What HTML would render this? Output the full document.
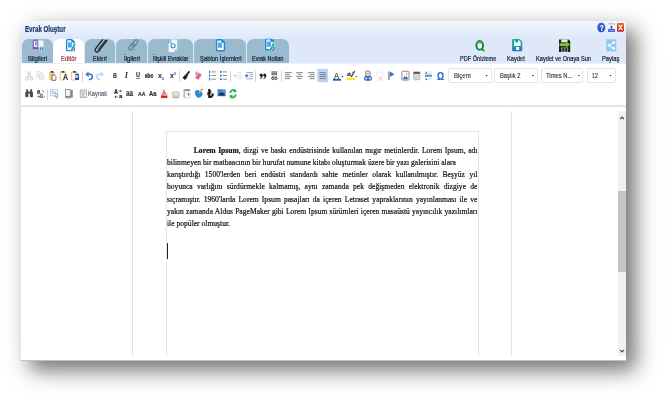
<!DOCTYPE html>
<html lang="tr">
<head>
<meta charset="utf-8">
<title>Evrak Oluştur</title>
<style>
html,body{margin:0;padding:0;}
body{width:668px;height:404px;background:#fff;position:relative;overflow:hidden;font-family:'Liberation Sans',Arial,sans-serif;}
#win{position:absolute;left:21px;top:21px;width:605px;height:340px;background:#fff;
  box-shadow:9px 9px 18px rgba(0,0,0,0.48), 9px 9px 32px rgba(0,0,0,0.13);}
#hdr{position:absolute;left:0;top:0;width:605px;height:42.5px;background:linear-gradient(#f4f8fd 0px,#e1ebfa 14px,#dee8f8 16px,#dee8f8 41px,#eaf1fb 42.5px);}
.tab{position:absolute;top:17.8px;height:24.4px;background:#9abbce;border-radius:6.5px 6.5px 0 0;}
.tab.act{background:#fff;}
.t{position:absolute;line-height:1;white-space:nowrap;transform-origin:0 0;filter:blur(0.3px);-webkit-text-stroke:0.2px currentColor;}
.sep{position:absolute;width:1px;background:#d4d4d4;}
.combo{position:absolute;top:47px;height:15px;border:1px solid #e3e3e3;border-radius:1.5px;background:#fff;box-sizing:border-box;}
.combo i{position:absolute;right:3.6px;top:5.2px;width:0;height:0;border-left:1.4px solid transparent;border-right:1.4px solid transparent;border-top:1.9px solid #333;}
#hr{position:absolute;left:0;top:84.2px;width:605px;height:1.6px;background:#e4e4e4;}
.vl{position:absolute;top:90px;width:1.3px;height:245px;background:#e0e3e9;}
#page{position:absolute;left:145.2px;top:110px;width:312.6px;height:225px;border:1px solid #e3e3e3;border-bottom:none;box-sizing:border-box;}
.bl{position:absolute;left:146.00px;width:376.07px;font-family:'Liberation Serif','Times New Roman',serif;font-size:9.2px;line-height:1;color:#101010;-webkit-text-stroke:0.22px #101010;filter:blur(0.3px);transform-origin:0 0;transform:scaleX(0.8254);white-space:nowrap;margin:0;}
.bl.j{white-space:normal;text-align:justify;text-align-last:justify;}
#caret{position:absolute;left:146px;top:222px;width:1px;height:15.5px;background:#222;}
#sb{position:absolute;left:597.3px;top:90.2px;width:7.7px;height:245px;background:#f1f1f1;}
#thumb{position:absolute;left:0;top:80px;width:7.7px;height:81px;background:#c5c5c5;}
#bot{position:absolute;left:0;top:338.8px;width:605px;height:1.4px;background:linear-gradient(#cfe0f5,#93a9c8);}
#ico{position:absolute;left:0;top:0;width:605px;height:340px;overflow:visible;filter:blur(0.28px);}
</style>
</head>
<body>
<div id="win">
<div id="hdr"></div>
<div class="tab" style="left:0.9px;width:30.9px"></div>
<div class="tab act" style="left:32.3px;width:31.0px"></div>
<div class="tab" style="left:64.0px;width:30.4px"></div>
<div class="tab" style="left:95.3px;width:30.5px"></div>
<div class="tab" style="left:126.9px;width:45.4px"></div>
<div class="tab" style="left:173.4px;width:51.6px"></div>
<div class="tab" style="left:226.3px;width:42.0px"></div>
<div class="sep" style="left:60.5px;top:50px;height:10.8px"></div>
<div class="sep" style="left:157.7px;top:50px;height:10.8px"></div>
<div class="sep" style="left:208.9px;top:50px;height:10.8px"></div>
<div class="sep" style="left:234.2px;top:50px;height:10.8px"></div>
<div class="sep" style="left:259.9px;top:50px;height:10.8px"></div>
<div class="sep" style="left:25.9px;top:67.9px;height:10.8px"></div>
<div class="combo" style="left:427.1px;width:44.0px"></div>
<div class="combo" style="left:473.4px;width:43.4px"></div>
<div class="combo" style="left:519.7px;width:42.8px"></div>
<div class="combo" style="left:565.8px;width:28.9px"></div>
<div id="hr"></div>
<div class="vl" style="left:111.2px"></div>
<div class="vl" style="left:489.6px"></div>
<div id="page"></div>
<div class="bl j" style="top:125.00px;text-indent:32.47px;"><b>Lorem Ipsum</b>, dizgi ve baskı endüstrisinde kullanılan mıgır metinlerdir. Lorem Ipsum, adı</div>
<div class="bl" style="top:137.00px;">bilinmeyen bir matbaacının bir hurufat numune kitabı oluşturmak üzere bir yazı galerisini alara</div>
<div class="bl j" style="top:149.00px;">karıştırdığı 1500'lerden beri endüstri standardı sahte metinler olarak kullanılmıştır. Beşyüz yıl</div>
<div class="bl j" style="top:161.00px;">boyunca varlığını sürdürmekle kalmamış, aynı zamanda pek değişmeden elektronik dizgiye de</div>
<div class="bl j" style="top:174.00px;">sıçramıştır. 1960'larda Lorem Ipsum pasajları da içeren Letraset yapraklarının yayınlanması ile ve</div>
<div class="bl j" style="top:186.00px;">yakın zamanda Aldus PageMaker gibi Lorem Ipsum sürümleri içeren masaüstü yayıncılık yazılımları</div>
<div class="bl" style="top:198.00px;">ile popüler olmuştur.</div>
<div id="caret"></div>
<div id="sb"><div id="thumb"></div></div>
<div id="bot"></div>
<svg id="ico" viewBox="21 21 605 340">
<linearGradient id="gh" x1="0" y1="0" x2="1" y2="1"><stop offset="0" stop-color="#3c70e0"/><stop offset="1" stop-color="#123fb4"/></linearGradient>
<ellipse cx="601.25" cy="27.5" rx="4.3" ry="5.2" fill="url(#gh)" stroke="#f4f8ff" stroke-width="0.7"/>
<rect x="608" y="23" width="7" height="9" rx="0.6" fill="#fbfbfd"/>
<rect x="608" y="23" width="7" height="1.6" fill="#c9c9cc"/>
<rect x="608" y="28.9" width="7" height="3.1" fill="#4a68d8"/>
<path d="M609.4 30.5 h4.2" stroke="#9db0ee" stroke-width="0.7"/>
<path d="M611.45 25.4 L613.2 27.3 H612.1 V28.9 H610.8 V27.3 H609.7 z" fill="#3050c8"/>
<linearGradient id="gc" x1="0" y1="0" x2="0" y2="1"><stop offset="0" stop-color="#ea5f1e"/><stop offset="1" stop-color="#c51f0c"/></linearGradient>
<rect x="617" y="22.9" width="6.9" height="8.9" rx="1.2" fill="url(#gc)"/>
<path d="M618.9 25.2 L622 29.6 M622 25.2 L618.9 29.6" stroke="#fff4ea" stroke-width="1.4" stroke-linecap="round"/>
<path d="M33.3 40.7 L37.9 39.9 V47.3 L33.3 48.2 z" fill="#f5f1f8" stroke="#8b3b9c" stroke-width="0.9"/>
<rect x="35.2" y="39.4" width="1.5" height="6.1" fill="#3f9ff0"/>
<path d="M38.5 39.9 L43.5 40.7 V47.9 L38.5 47.3 z" fill="#f4f4f6" stroke="#cfd0d8" stroke-width="0.5"/>
<path d="M32.9 47.5 q2.7 -1 5.2 0.7 v1.5 q-2.5 -1.5 -5.2 -0.5 z" fill="#8b3b9c"/>
<path d="M38.1 48.2 q1 -0.7 2 -0.8 v1.2 q-1 0.2 -2 1.1 z" fill="#b9b2c0"/>
<circle cx="41.6" cy="48.7" r="2.3" fill="#2b7bd2" stroke="#d7ead9" stroke-width="0.7"/>
<path d="M41.6 48.4 v1.9" stroke="#fff" stroke-width="0.9"/><circle cx="41.6" cy="47.4" r="0.5" fill="#fff"/>
<g transform="translate(0 0)"><path d="M66.6 40.5 q0 -0.9 0.9 -0.9 h4.2 l2.7 2.5 v7.6 q0 0.9 -0.9 0.9 h-6 q-0.9 0 -0.9 -0.9 z" fill="#fdfeff" stroke="#1b8ad8" stroke-width="1.4"/><path d="M71.2 39.2 l3.6 3.3 h-3.6 z" fill="#1b8ad8"/><rect x="68" y="42.5" width="3.9" height="5" fill="#3f9fe6"/><path d="M68 44 h3.9 M68 45.6 h3.9" stroke="#8cc8f4" stroke-width="0.4"/><rect x="68.2" y="40.8" width="1.8" height="0.8" fill="#9fd0f5"/><path d="M74.7 44.2 L71.7 50.2" stroke="#fff" stroke-width="2.6" stroke-linecap="round"/><path d="M74.7 44.2 L71.7 50.2" stroke="#16aa8c" stroke-width="1.7" stroke-linecap="round"/><path d="M70.8 51.6 l0.3 -1.7 l1.2 0.6 z" fill="#56606a"/></g>
<path d="M102.6 39.7 L95.3 49.1 A1.95 1.95 0 0 0 98.3 51.5 L106.8 40.5" stroke="#1e1e1e" stroke-width="1.3" fill="none" stroke-linecap="round"/>
<path d="M105.6 40.0 L98.4 49.4" stroke="#1e1e1e" stroke-width="1.0" fill="none" stroke-linecap="round"/>
<rect x="133.3" y="39.4" width="3.3" height="7.4" rx="1.65" fill="none" stroke="#5f7582" stroke-width="1.05" transform="rotate(36.7 134.95 43.1)"/>
<rect x="129.9" y="42.9" width="3.3" height="7.4" rx="1.65" fill="none" stroke="#5f7582" stroke-width="1.05" transform="rotate(36.7 131.55 46.6)"/>
<path d="M131.2 50.2 h4.6" stroke="#a3929c" stroke-width="0.7"/>
<path d="M168.7 39.6 h8.4 v9.7 l-2.7 2.8 h-5.7 z" fill="#f7f9fb" stroke="#c9d3dc" stroke-width="0.4"/>
<path d="M177.1 49.3 h-2.7 v2.8 z" fill="#bcc8d4"/>
<circle cx="169.6" cy="41.2" r="1.45" fill="none" stroke="#4a90d8" stroke-width="0.95"/>
<circle cx="173.1" cy="45.8" r="2.05" fill="none" stroke="#4a90d8" stroke-width="1.15"/>
<path d="M170.5 42.4 L171.8 44.2" stroke="#4a90d8" stroke-width="0.9"/>
<g transform="translate(150.0 0.2)"><path d="M66.6 40.5 q0 -0.9 0.9 -0.9 h4.2 l2.7 2.5 v7.6 q0 0.9 -0.9 0.9 h-6 q-0.9 0 -0.9 -0.9 z" fill="#fdfeff" stroke="#1b8ad8" stroke-width="1.4"/><path d="M71.2 39.2 l3.6 3.3 h-3.6 z" fill="#1b8ad8"/><rect x="68" y="42.5" width="3.9" height="5" fill="#3f9fe6"/><path d="M68 44 h3.9 M68 45.6 h3.9" stroke="#8cc8f4" stroke-width="0.4"/><rect x="68.2" y="40.8" width="1.8" height="0.8" fill="#9fd0f5"/></g>
<clipPath id="cpn"><rect x="60" y="39.5" width="20" height="14"/></clipPath>
<g transform="translate(199.1 -0.8)" clip-path="url(#cpn)"><path d="M66.6 40.5 q0 -0.9 0.9 -0.9 h4.2 l2.7 2.5 v7.6 q0 0.9 -0.9 0.9 h-6 q-0.9 0 -0.9 -0.9 z" fill="#fdfeff" stroke="#1b8ad8" stroke-width="1.4"/><path d="M71.2 39.2 l3.6 3.3 h-3.6 z" fill="#1b8ad8"/><rect x="68" y="42.5" width="3.9" height="5" fill="#3f9fe6"/><path d="M68 44 h3.9 M68 45.6 h3.9" stroke="#8cc8f4" stroke-width="0.4"/><rect x="68.2" y="40.8" width="1.8" height="0.8" fill="#9fd0f5"/><path d="M74.7 44.2 L71.7 50.2" stroke="#fff" stroke-width="2.6" stroke-linecap="round"/><path d="M74.7 44.2 L71.7 50.2" stroke="#16aa8c" stroke-width="1.7" stroke-linecap="round"/><path d="M70.8 51.6 l0.3 -1.7 l1.2 0.6 z" fill="#56606a"/></g>
<ellipse cx="479.7" cy="45.4" rx="3.3" ry="4.3" fill="#f6fbf7" stroke="#0f8a3a" stroke-width="2"/>
<path d="M482.2 49.2 L483.7 50.7" stroke="#0f8a3a" stroke-width="1.7" stroke-linecap="round"/>
<path d="M478.2 43.6 q1.5 -1.3 3 0" stroke="#0f8a3a" stroke-width="0.8" fill="none"/>
<linearGradient id="gk" x1="0" y1="0" x2="0" y2="1"><stop offset="0" stop-color="#15ae96"/><stop offset="0.6" stop-color="#1c9fb0"/><stop offset="1" stop-color="#1a74b8"/></linearGradient>
<path d="M513.3 39 h6.2 l2.8 2.6 v8.5 q0 1.2 -1.2 1.2 h-7.8 q-1.2 0 -1.2 -1.2 v-9.9 q0 -1.2 1.2 -1.2 z" fill="url(#gk)"/>
<path d="M514 40.4 h1.3 v2.2 h2.7 v-2.2 h1.2 l1.4 1.3 v4.3 h-6.6 z" fill="#fafffe"/>
<rect x="516.1" y="47" width="3" height="3" fill="#fafffe"/>
<path d="M559 39.4 h9.6 l1.6 1.6 v11 h-11.2 z" fill="#1e1e1e"/>
<rect x="561.2" y="39.4" width="6.4" height="3" fill="#e9e9e9"/>
<rect x="561.2" y="47.4" width="6.8" height="4.6" fill="#8d8d8d"/>
<rect x="562.6" y="48.2" width="1.6" height="3.2" fill="#1e1e1e"/><rect x="565.4" y="48.2" width="1.6" height="3.2" fill="#1e1e1e"/>
<path d="M559.6 43.2 h6.6 v-1.4 l3.8 2.8 l-3.8 2.8 v-1.4 h-6.6 z" fill="#7dc62e" stroke="#4d9a14" stroke-width="0.4"/>
<rect x="606.1" y="39.2" width="10.2" height="12.2" fill="#8fcbf0"/>
<path d="M613.6 42.6 L609 45.3 L613.6 48.2" stroke="#fff" stroke-width="0.8" fill="none"/>
<circle cx="613.7" cy="42.5" r="1.35" fill="#fff"/><circle cx="608.9" cy="45.3" r="1.35" fill="#fff"/><circle cx="613.7" cy="48.3" r="1.35" fill="#fff"/>
<path d="M27.2 71.3 L31.2 77.2 M31.4 71.3 L27.4 77.2" stroke="#c2c2c2" stroke-width="0.9" fill="none"/>
<circle cx="27" cy="78.5" r="1.5" fill="none" stroke="#aec6e8" stroke-width="0.9"/><circle cx="31.6" cy="78.5" r="1.5" fill="none" stroke="#aec6e8" stroke-width="0.9"/>
<path d="M37.1 71.5 h3.2 l1 1 v4.6 h-4.2 z" fill="#f3f5f9" stroke="#d3d9e3" stroke-width="0.7"/>
<path d="M39.6 73.8 h3.2 l1.1 1.1 v5 h-4.3 z" fill="#f3f5f9" stroke="#d3d9e3" stroke-width="0.7"/>
<path d="M40.6 76.4 h2 M40.6 77.8 h2" stroke="#cfe0f3" stroke-width="0.6"/>
<rect x="49.2" y="72" width="5.8" height="8.2" rx="0.5" fill="#f2c77c"/>
<rect x="50.6" y="71" width="3" height="1.7" rx="0.4" fill="#4a4a4a"/>
<path d="M52 75 h2.6 l1.3 1.3 v4 h-3.9 z" fill="#fff" stroke="#3e3e3e" stroke-width="0.7"/>
<rect x="60.2" y="72.2" width="5.4" height="7.8" rx="0.5" fill="#fff" stroke="#f2c77c" stroke-width="1.2"/>
<rect x="61.5" y="71" width="3" height="1.7" rx="0.4" fill="#4a4a4a"/>
<rect x="64.2" y="74.6" width="3.8" height="6" fill="#fff"/>
<rect x="71.6" y="72.2" width="5.4" height="7.8" rx="0.5" fill="#fff" stroke="#f2c77c" stroke-width="1.2"/>
<rect x="72.9" y="71" width="3" height="1.7" rx="0.4" fill="#4a4a4a"/>
<rect x="75" y="73.8" width="4" height="6.2" rx="0.4" fill="#2a4b9c"/>
<path d="M87.6 74.3 h2.2 a2.55 2.55 0 0 1 0 5.1 h-1" stroke="#3a78c2" stroke-width="1.5" fill="none"/>
<path d="M85.3 74.3 L88.6 71.4 L88.6 77.2 z" fill="#3a78c2"/>
<path d="M101.6 74.3 h-2.2 a2.55 2.55 0 0 0 0 5.1 h1" stroke="#bdd4ed" stroke-width="1.5" fill="none"/>
<path d="M103.9 74.3 L100.6 71.4 L100.6 77.2 z" fill="#bdd4ed"/>
<path d="M135.9 78.5 h4.2" stroke="#3d3d3d" stroke-width="0.7"/>
<path d="M145.2 75.9 h8.5" stroke="#3d3d3d" stroke-width="0.6"/>
<path d="M189 71.9 L186.5 75" stroke="#1c1c1c" stroke-width="1.8" stroke-linecap="round"/>
<path d="M186.2 74 L188.2 75.6 L187.4 76.6 L185.4 75 z" fill="#1c1c1c"/>
<path d="M185.0 75.0 L187.6 77.1 L185.0 80.0 L182.4 77.8 z" fill="#1c1c1c"/>
<path d="M198.6 72.6 L201.7 74.7 L198.3 79.9 L195.2 77.8 z" fill="#e9637e"/>
<path d="M196.4 71.2 L197.8 72.1 L196.3 75.3 L195 74.5 z" fill="#8f8f8f"/>
<rect x="209" y="70.7" width="1.2" height="2.4" fill="#3b6ec4"/>
<path d="M211.4 71.9 h4.4" stroke="#8c8c8c" stroke-width="1"/>
<rect x="209" y="74.3" width="1.2" height="2.4" fill="#3b6ec4"/>
<path d="M211.4 75.5 h4.4" stroke="#8c8c8c" stroke-width="1"/>
<rect x="209" y="78.0" width="1.2" height="2.4" fill="#3b6ec4"/>
<path d="M211.4 79.2 h4.4" stroke="#8c8c8c" stroke-width="1"/>
<rect x="220" y="71.0" width="1.7" height="1.8" fill="#3b6ec4"/>
<path d="M222.8 71.9 h4.3" stroke="#8c8c8c" stroke-width="1"/>
<rect x="220" y="74.6" width="1.7" height="1.8" fill="#3b6ec4"/>
<path d="M222.8 75.5 h4.3" stroke="#8c8c8c" stroke-width="1"/>
<rect x="220" y="78.3" width="1.7" height="1.8" fill="#3b6ec4"/>
<path d="M222.8 79.2 h4.3" stroke="#8c8c8c" stroke-width="1"/>
<path d="M233.4 75.7 L236 73.6 V77.8 z" fill="#c5daf1"/><path d="M236 75.7 h1.4" stroke="#c5daf1" stroke-width="1"/>
<path d="M237.2 72.7 h4.4 M238.6 74.7 h3 M238.6 76.7 h3 M237.2 78.7 h4.4" stroke="#dcdcdc" stroke-width="0.9"/>
<path d="M248.6 75.7 L246.2 73.5 V77.9 z" fill="#2f80d8"/><path d="M244.9 75.7 h1.6" stroke="#2f80d8" stroke-width="1.3"/>
<path d="M246.6 72.5 h6.2 M249.6 74.6 h3.2 M249.6 76.7 h3.2 M246.6 78.8 h6.2" stroke="#9a9a9a" stroke-width="0.9"/>
<circle cx="261.1" cy="75.1" r="1.55" fill="#1f1f1f"/>
<path d="M262.65000000000003 75.1 q0.2 3 -2.6 4 l-0.2 -0.6 q1.4 -0.8 1.5 -2.4 z" fill="#1f1f1f"/>
<circle cx="264.7" cy="75.1" r="1.55" fill="#1f1f1f"/>
<path d="M266.25 75.1 q0.2 3 -2.6 4 l-0.2 -0.6 q1.4 -0.8 1.5 -2.4 z" fill="#1f1f1f"/>
<path d="M271.4 71.9 h5.8 M271.4 73.3 h5.8 M271.4 74.7 h5.8" stroke="#444" stroke-width="0.7"/>
<path d="M272.3 71.6 v3.4 M274.3 71.6 v3.4 M276.3 71.6 v3.4" stroke="#444" stroke-width="0.5"/>
<circle cx="272.9" cy="78.5" r="1.15" fill="none" stroke="#2a2a2a" stroke-width="0.8"/>
<path d="M271.79999999999995 78.3 q0 -1.8 1.8 -2.2" stroke="#2a2a2a" stroke-width="0.7" fill="none"/>
<circle cx="275.9" cy="78.5" r="1.15" fill="none" stroke="#2a2a2a" stroke-width="0.8"/>
<path d="M274.79999999999995 78.3 q0 -1.8 1.8 -2.2" stroke="#2a2a2a" stroke-width="0.7" fill="none"/>
<rect x="317.8" y="69.2" width="9.8" height="12.7" fill="#bdd4f3" stroke="#aac5ee" stroke-width="0.5"/>
<path d="M284.9 72.7 H291.7" stroke="#7d7d7d" stroke-width="0.95"/>
<path d="M284.9 74.7 H289.8" stroke="#7d7d7d" stroke-width="0.95"/>
<path d="M284.9 76.6 H291.7" stroke="#7d7d7d" stroke-width="0.95"/>
<path d="M284.9 78.6 H290" stroke="#7d7d7d" stroke-width="0.95"/>
<path d="M296.2 72.7 H302.9" stroke="#7d7d7d" stroke-width="0.95"/>
<path d="M297.6 74.7 H301.5" stroke="#7d7d7d" stroke-width="0.95"/>
<path d="M296.2 76.6 H302.9" stroke="#7d7d7d" stroke-width="0.95"/>
<path d="M297.4 78.6 H301.7" stroke="#7d7d7d" stroke-width="0.95"/>
<path d="M307.9 72.7 H314.6" stroke="#7d7d7d" stroke-width="0.95"/>
<path d="M310 74.7 H314.6" stroke="#7d7d7d" stroke-width="0.95"/>
<path d="M307.9 76.6 H314.6" stroke="#7d7d7d" stroke-width="0.95"/>
<path d="M309.8 78.6 H314.6" stroke="#7d7d7d" stroke-width="0.95"/>
<path d="M319.4 72.7 H326" stroke="#74808f" stroke-width="0.95"/>
<path d="M319.4 74.7 H326" stroke="#74808f" stroke-width="0.95"/>
<path d="M319.4 76.6 H326" stroke="#74808f" stroke-width="0.95"/>
<path d="M319.4 78.6 H326" stroke="#74808f" stroke-width="0.95"/>
<rect x="332.9" y="78.8" width="8.2" height="1.9" fill="#2a61b0"/>
<path d="M341.4 76.1 h2 l-1 1.2 z" fill="#333"/>
<path d="M354.6 71.4 L351.4 76.6" stroke="#3a3a3a" stroke-width="1.1" stroke-linecap="round"/>
<path d="M351.8 71.8 L353.6 73" stroke="#3a3a3a" stroke-width="0.7"/>
<rect x="347" y="78.1" width="8" height="2.1" fill="#f4f000"/>
<path d="M355.3 76.1 h2 l-1 1.2 z" fill="#333"/>
<rect x="365.4" y="70.9" width="4.8" height="5.6" rx="2.2" fill="#e2e2e2" stroke="#a2a2a2" stroke-width="1.1"/>
<path d="M365.6 74 h4.4" stroke="#a2a2a2" stroke-width="0.8"/>
<rect x="364" y="76.1" width="8" height="4.6" rx="2.3" fill="#2b6cbc"/>
<ellipse cx="366.2" cy="78.4" rx="1" ry="0.9" fill="#fff"/><ellipse cx="369.8" cy="78.4" rx="1" ry="0.9" fill="#fff"/>
<path d="M377 74.4 a1.8 1.8 0 0 1 2.6 -2.2 M380.4 72.2 a1.8 1.8 0 0 1 2.6 2.2" stroke="#bcd3ee" stroke-width="0.9" fill="none" stroke-dasharray="1.2 0.6"/>
<path d="M378.2 76 L382.8 80.6 M382.8 76 L378.2 80.6" stroke="#f1b6a7" stroke-width="0.9"/>
<path d="M388.9 71.4 V80" stroke="#8e8e8e" stroke-width="1.5"/>
<path d="M389.9 71.5 L394.4 74.2 L389.9 76.9 z" fill="#2f78cf"/>
<rect x="401.9" y="71.3" width="7.1" height="8.8" rx="0.5" fill="#fff" stroke="#8c8c8c" stroke-width="1"/>
<path d="M402.8 79.2 L404.5 75.9 L405.6 77.6 L406.7 76.2 L408.2 79.2 z" fill="#2b6cbc"/>
<rect x="406" y="72.8" width="1.3" height="1.8" fill="#f0a236"/>
<rect x="413.6" y="71.9" width="6.3" height="7.8" rx="0.6" fill="#f1f1f1" stroke="#a1a1a1" stroke-width="0.7"/>
<rect x="413.6" y="71.9" width="6.3" height="2" fill="#555"/>
<path d="M415.7 73.9 v5.8 M417.8 73.9 v5.8 M413.6 75.8 h6.3 M413.6 77.8 h6.3" stroke="#b0b0b0" stroke-width="0.5"/>
<rect x="424.9" y="74.6" width="7.2" height="2.3" fill="#5d9de2"/>
<path d="M425.1 73.7 L426.3 71.3 L427.5 73.7 z M425.1 80.1 L426.3 77.7 L427.5 80.1 z" fill="#6a6a6a"/>
<path d="M428.4 72 h3.4 M428.4 73.3 h2.6 M428.4 78.4 h3.4 M428.4 79.7 h2.6" stroke="#cfcfcf" stroke-width="0.7"/>
<rect x="25.3" y="91.8" width="3.1" height="5.5" rx="0.8" fill="#4d4d4d"/><rect x="29.9" y="91.8" width="3.1" height="5.5" rx="0.8" fill="#4d4d4d"/>
<rect x="26.2" y="89.2" width="1.9" height="3.2" rx="0.5" fill="#4d4d4d"/><rect x="30.2" y="89.2" width="1.9" height="3.2" rx="0.5" fill="#4d4d4d"/>
<rect x="27.9" y="91.6" width="2.6" height="2" fill="#4d4d4d"/>
<path d="M37.2 96.6 h2.4 M38.6 95.4 l1.4 1.2 l-1.4 1.2" stroke="#2b6cc4" stroke-width="0.8" fill="none"/>
<path d="M43.6 97.6 q0.8 -0.2 0.8 -1.4 M42.2 90.6 q1.6 0.2 1.6 1.8" stroke="#2b6cc4" stroke-width="0.8" fill="none"/>
<rect x="50.6" y="89.4" width="7" height="6.4" fill="#f4f8fe" stroke="#5c96de" stroke-width="0.7" stroke-dasharray="1 0.7"/>
<path d="M51.8 91.4 h2.6 M51.8 93 h2" stroke="#5c96de" stroke-width="0.7"/>
<path d="M55.2 92.2 L58.2 95.8 L56.9 95.9 L57.6 97.9 L56.8 98.2 L56 96.2 L55.2 97 z" fill="#fff" stroke="#666" stroke-width="0.5"/>
<rect x="65.5" y="89.5" width="4.8" height="7" fill="#f6f6f6" stroke="#858585" stroke-width="0.8"/>
<path d="M71.9 90.4 V97.0" stroke="#666" stroke-width="1.4" stroke-linecap="round"/>
<ellipse cx="68.2" cy="97.2" rx="2.7" ry="0.9" fill="#d8d8d8" stroke="#555" stroke-width="0.7"/>
<rect x="80.3" y="89.9" width="6.2" height="7.7" fill="#f3f3f3" stroke="#777" stroke-width="0.8" stroke-dasharray="1.2 0.5"/>
<path d="M81.6 91.8 h3.6 M81.6 93.3 h3.6 M81.6 94.8 h2.6 M81.6 96.2 h3.2" stroke="#7d7d7d" stroke-width="0.7" stroke-dasharray="1 0.4"/>
<path d="M118.6 91 h2.6 M120.2 90 l1.2 1 l-1.2 1" stroke="#222" stroke-width="0.7" fill="none"/>
<path d="M117.6 96.8 h-2.6 M116 95.8 l-1.2 1 l1.2 1" stroke="#222" stroke-width="0.7" fill="none"/>
<path d="M161.1 89.5 h4.4 l1.8 1.8 v6.6 h-6.2 z" fill="#fff" stroke="#d6d6d6" stroke-width="0.5"/>
<rect x="161.1" y="95.5" width="6.2" height="2.4" fill="#d8191c"/>
<path d="M162.3 94.7 C163.9 92.3 164.7 90.9 164 90.4 C163.2 90.2 163.6 92.5 166.3 93.9 C164.6 93.7 163.2 94.1 162.3 94.7 z" fill="none" stroke="#d8191c" stroke-width="0.8"/>
<rect x="172.3" y="91.7" width="7" height="5.6" rx="1.4" fill="#d2d2d2" stroke="#b4b4b4" stroke-width="0.6"/>
<rect x="173.4" y="92.6" width="4.8" height="2.6" rx="0.8" fill="#e4e4e4"/>
<path d="M173 97.6 h5.6" stroke="#8f8f8f" stroke-width="0.8"/>
<rect x="184" y="89.3" width="6" height="8.6" fill="#fdfdfd" stroke="#d6c9a8" stroke-width="0.6"/>
<path d="M184.2 89.3 v8.6" stroke="#d99b38" stroke-width="1"/>
<rect x="184.8" y="89.4" width="5.1" height="1.5" fill="#4b82d2"/>
<path d="M186 92.6 h2.6 M186 94.2 h1.6" stroke="#bdbdbd" stroke-width="0.6"/><rect x="188.2" y="93" width="1" height="2.6" fill="#555"/>
<path d="M194.8 92.4 q0.2 -2.4 2.8 -2.4 q1.6 0 2.2 1.2 q2.6 -0.2 2.8 2.2 q0.2 2.6 -3.6 4.6 q-4 -1.4 -4.2 -5.6 z" fill="#2a8dd6"/>
<path d="M201.9 89.5 L199.4 92.5" stroke="#e9b233" stroke-width="1.2" stroke-linecap="round"/><circle cx="202" cy="89.5" r="0.7" fill="#d84242"/>
<rect x="217.5" y="89.3" width="8.1" height="6.9" fill="#3f82d4"/>
<path d="M218.2 95.5 L220.8 92 L222 93.6 L223 92.6 L225 95.5 z" fill="#1c2c4e"/>
<rect x="223.4" y="90.2" width="1.1" height="1.2" fill="#f4d23c"/>
<path d="M230.2 93 a3.3 3.6 0 0 1 5.2 -2.4" stroke="#2fb44a" stroke-width="1.9" fill="none"/>
<path d="M235.8 94.4 a3.3 3.6 0 0 1 -5.2 2.4" stroke="#2fb44a" stroke-width="1.9" fill="none"/>
<path d="M234 88.8 L237.2 91.6 L233.4 92.8 z" fill="#2fb44a"/>
<path d="M232 98.6 L228.8 95.8 L232.6 94.6 z" fill="#2fb44a"/>
<path d="M485.65 74.9 h2.1 l-1.05 1.5 z" fill="#2e2e2e"/>
<path d="M531.85 74.9 h2.1 l-1.05 1.5 z" fill="#2e2e2e"/>
<path d="M577.85 74.9 h2.1 l-1.05 1.5 z" fill="#2e2e2e"/>
<path d="M609.45 74.9 h2.1 l-1.05 1.5 z" fill="#2e2e2e"/>
<path d="M620.2 119 L622.1 117 L624 119" fill="none" stroke="#444" stroke-width="1.1"/>
<path d="M620.2 349.9 L622.1 351.9 L624 349.9" fill="none" stroke="#444" stroke-width="1.1"/>
</svg>
<span class="t" style="left:3.70px;top:5.00px;font-size:8.2px;color:#1f3566;transform:scaleX(0.7550);font-weight:bold;">Evrak Oluştur</span>
<span class="t" style="left:7.00px;top:34.00px;font-size:7.2px;color:#0f1a33;transform:scaleX(0.8273);">Bilgileri</span>
<span class="t" style="left:40.20px;top:34.00px;font-size:7.2px;color:#a33434;transform:scaleX(0.8294);">Editör</span>
<span class="t" style="left:72.40px;top:34.00px;font-size:7.2px;color:#0f1a33;transform:scaleX(0.7609);">Ekleri</span>
<span class="t" style="left:102.60px;top:34.00px;font-size:7.2px;color:#0f1a33;transform:scaleX(0.8455);">İlgileri</span>
<span class="t" style="left:132.30px;top:34.00px;font-size:7.2px;color:#0f1a33;transform:scaleX(0.7762);">İlişkili Evraklar</span>
<span class="t" style="left:178.70px;top:34.00px;font-size:7.2px;color:#0f1a33;transform:scaleX(0.8121);">Şablon İşlemleri</span>
<span class="t" style="left:231.40px;top:34.00px;font-size:7.2px;color:#0f1a33;transform:scaleX(0.7618);">Evrak Notları</span>
<span class="t" style="left:438.60px;top:34.00px;font-size:7.2px;color:#0f1a33;transform:scaleX(0.7776);">PDF Önizleme</span>
<span class="t" style="left:486.00px;top:34.00px;font-size:7.2px;color:#0f1a33;transform:scaleX(0.7941);">Kaydet</span>
<span class="t" style="left:515.10px;top:34.00px;font-size:7.2px;color:#0f1a33;transform:scaleX(0.7866);">Kaydet ve Onaya Sun</span>
<span class="t" style="left:580.80px;top:34.00px;font-size:7.2px;color:#0f1a33;transform:scaleX(0.8005);">Paylaş</span>
<span class="t" style="left:67.40px;top:69.00px;font-size:7.0px;color:#5a667a;transform:scaleX(0.8138);">Kaynak</span>
<span class="t" style="left:432.80px;top:51.00px;font-size:7.2px;color:#444;transform:scaleX(0.8348);">Biçem</span>
<span class="t" style="left:479.00px;top:51.00px;font-size:7.2px;color:#444;transform:scaleX(0.8004);">Başlık 2</span>
<span class="t" style="left:525.00px;top:51.00px;font-size:7.2px;color:#444;transform:scaleX(0.8145);">Times N...</span>
<span class="t" style="left:571.20px;top:51.00px;font-size:7.2px;color:#444;transform:scaleX(0.7242);">12</span>
<span class="t" style="left:91.50px;top:51.00px;font-size:7.6px;color:#3d3d3d;transform:scaleX(0.6923);font-weight:bold;">B</span>
<span class="t" style="left:103.80px;top:51.00px;font-size:7.8px;color:#3d3d3d;transform:scaleX(0.9223);font-weight:bold;font-style:italic;font-family:'Liberation Serif','Times New Roman',serif;">I</span>
<span class="t" style="left:115.00px;top:50.00px;font-size:7.4px;color:#3d3d3d;transform:scaleX(0.7483);font-weight:bold;">U</span>
<span class="t" style="left:124.40px;top:52.00px;font-size:6.6px;color:#3d3d3d;transform:scaleX(0.7122);font-weight:bold;">abc</span>
<span class="t" style="left:136.80px;top:51.00px;font-size:7.7px;color:#3d3d3d;transform:scaleX(0.8873);font-weight:bold;">x</span>
<span class="t" style="left:141.00px;top:56.00px;font-size:4.2px;color:#3b78d0;transform:scaleX(0.7706);font-weight:bold;">2</span>
<span class="t" style="left:148.90px;top:51.00px;font-size:7.7px;color:#3d3d3d;transform:scaleX(0.8873);font-weight:bold;">x</span>
<span class="t" style="left:153.10px;top:51.00px;font-size:4.2px;color:#3b78d0;transform:scaleX(0.7706);font-weight:bold;">2</span>
<span class="t" style="left:313.40px;top:51.00px;font-size:9.0px;color:#3a3a3a;transform:scaleX(0.8496);">A</span>
<span class="t" style="left:326.20px;top:51.00px;font-size:5.0px;color:#3a3a3a;transform:scaleX(0.7197);font-weight:bold;">ab</span>
<span class="t" style="left:415.70px;top:50.00px;font-size:10.5px;color:#2b6cc4;transform:scaleX(0.8434);font-weight:bold;">Ω</span>
<span class="t" style="left:105.00px;top:68.00px;font-size:9.0px;color:#333;transform:scaleX(0.7092);font-weight:bold;">aa</span>
<span class="t" style="left:116.50px;top:70.00px;font-size:6.0px;color:#333;transform:scaleX(0.8538);font-weight:bold;">AA</span>
<span class="t" style="left:128.20px;top:69.00px;font-size:7.4px;color:#333;transform:scaleX(0.7822);font-weight:bold;">Aa</span>
<span class="t" style="left:186.00px;top:68.00px;font-size:11.5px;color:#111;transform:scaleX(0.8747);font-weight:bold;font-family:'DejaVu Sans','Liberation Sans',sans-serif;">₺</span>
<span class="t" style="left:41.90px;top:52.00px;font-size:8.8px;color:#2e2e2e;transform:scaleX(0.7866);font-weight:bold;">A</span>
<span class="t" style="left:16.00px;top:68.00px;font-size:6.8px;color:#444;transform:scaleX(0.8988);font-weight:bold;">a</span>
<span class="t" style="left:19.20px;top:72.00px;font-size:6.6px;color:#444;transform:scaleX(0.8715);font-weight:bold;">c</span>
<span class="t" style="left:93.00px;top:68.00px;font-size:6.4px;color:#222;transform:scaleX(0.8654);font-weight:bold;">A</span>
<span class="t" style="left:97.60px;top:73.00px;font-size:5.8px;color:#222;transform:scaleX(0.9918);font-weight:bold;">a</span>
<span class="t" style="left:578.50px;top:3.00px;font-size:8.8px;color:#fff;transform:scaleX(0.6696);font-weight:bold;">?</span>
<span class="t" style="left:54.40px;top:55.00px;font-size:3.6px;color:#dfe8ff;transform:scaleX(0.9416);font-weight:bold;">W</span>
</div>
</body>
</html>
